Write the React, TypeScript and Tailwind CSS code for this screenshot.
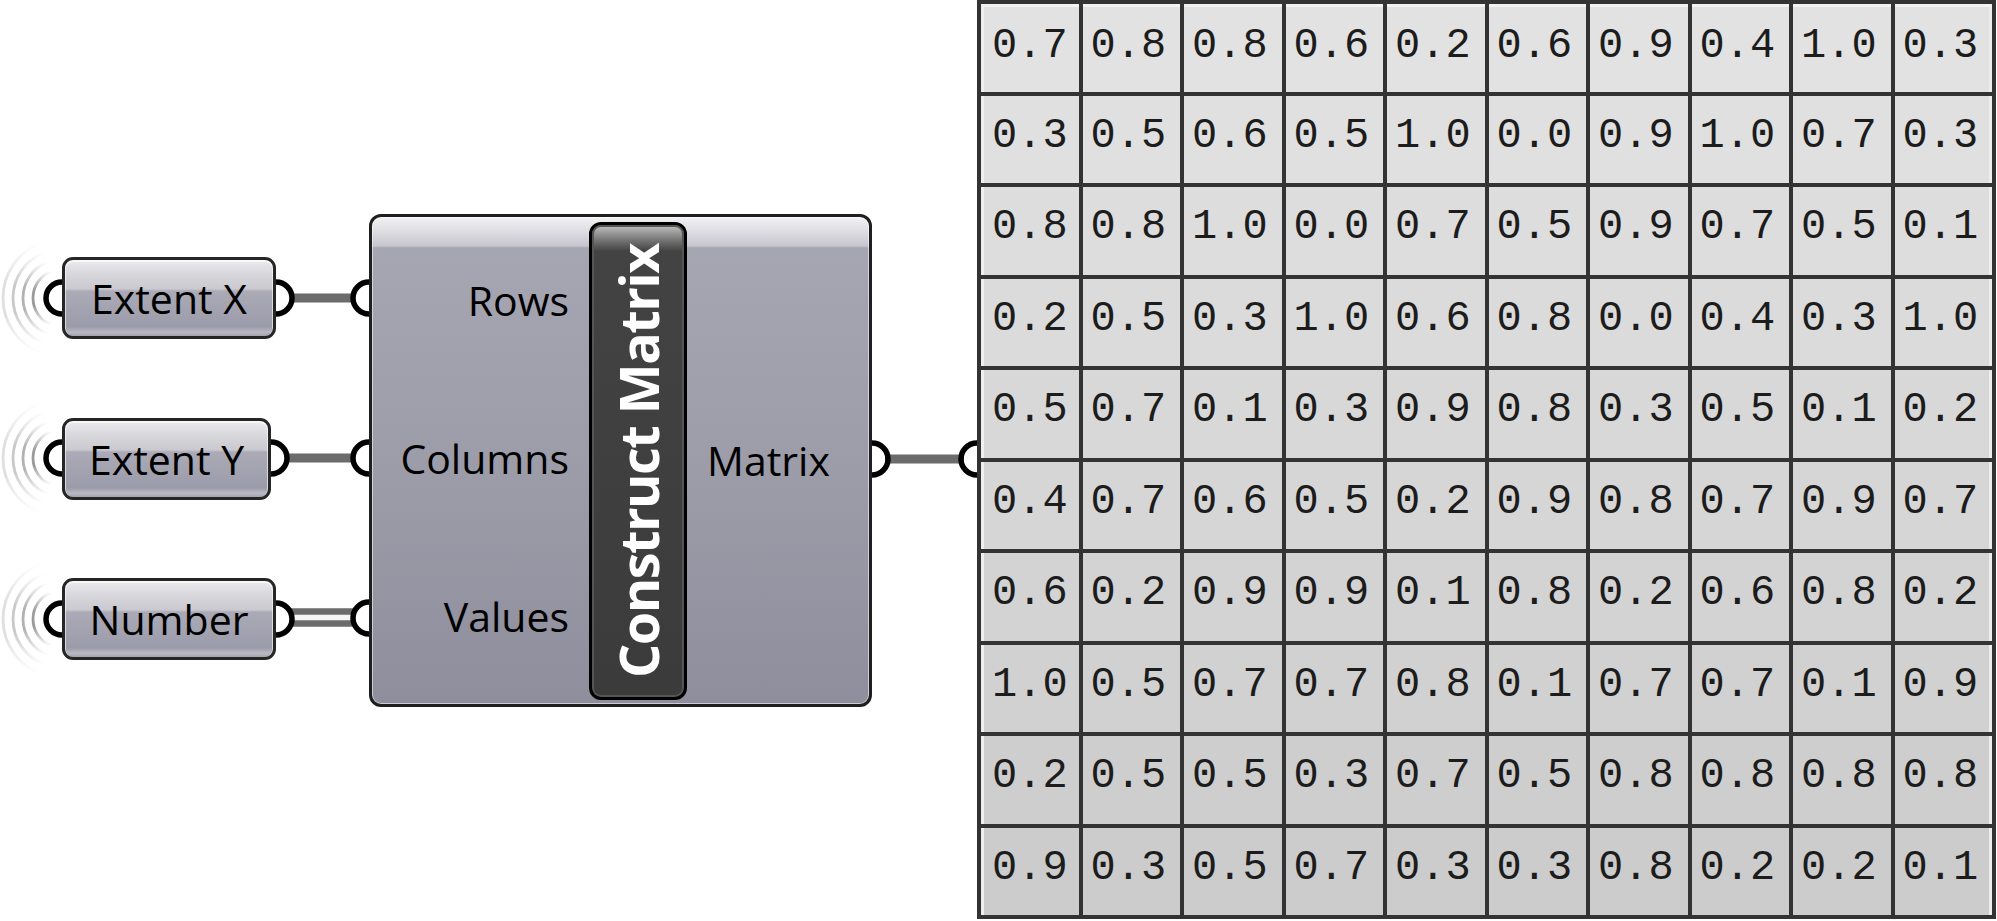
import React from 'react';

// values shown in the panel, row by row
const matrix: string[][] = [
  ['0.7', '0.8', '0.8', '0.6', '0.2', '0.6', '0.9', '0.4', '1.0', '0.3'],
  ['0.3', '0.5', '0.6', '0.5', '1.0', '0.0', '0.9', '1.0', '0.7', '0.3'],
  ['0.8', '0.8', '1.0', '0.0', '0.7', '0.5', '0.9', '0.7', '0.5', '0.1'],
  ['0.2', '0.5', '0.3', '1.0', '0.6', '0.8', '0.0', '0.4', '0.3', '1.0'],
  ['0.5', '0.7', '0.1', '0.3', '0.9', '0.8', '0.3', '0.5', '0.1', '0.2'],
  ['0.4', '0.7', '0.6', '0.5', '0.2', '0.9', '0.8', '0.7', '0.9', '0.7'],
  ['0.6', '0.2', '0.9', '0.9', '0.1', '0.8', '0.2', '0.6', '0.8', '0.2'],
  ['1.0', '0.5', '0.7', '0.7', '0.8', '0.1', '0.7', '0.7', '0.1', '0.9'],
  ['0.2', '0.5', '0.5', '0.3', '0.7', '0.5', '0.8', '0.8', '0.8', '0.8'],
  ['0.9', '0.3', '0.5', '0.7', '0.3', '0.3', '0.8', '0.2', '0.2', '0.1'],
];

const rowBg = [
  'bg-[#e2e2e2]',
  'bg-[#e0e0e0]',
  'bg-[#dddddd]',
  'bg-[#dbdbdb]',
  'bg-[#d8d8d8]',
  'bg-[#d6d6d6]',
  'bg-[#d3d3d3]',
  'bg-[#d1d1d1]',
  'bg-[#cecece]',
  'bg-[#cccccc]',
];

const params = [
  { label: 'Extent X', pos: 'top-[257px] w-[214px]', cy: 298, right: 276 },
  { label: 'Extent Y', pos: 'top-[418px] w-[209px]', cy: 458, right: 271 },
  { label: 'Number', pos: 'top-[578px] w-[214px]', cy: 619, right: 276 },
];

const ringColors = ['#9a9a9a', '#b2b2b2', '#c9c9c9', '#dfdfdf'];
const ringRadii = [29, 39, 49, 59];

const GRIP_R = 16;

const leftGrip = (cx: number, cy: number) =>
  `M ${cx} ${cy - GRIP_R} A ${GRIP_R} ${GRIP_R} 0 0 0 ${cx} ${cy + GRIP_R}`;
const rightGrip = (cx: number, cy: number) =>
  `M ${cx} ${cy - GRIP_R} A ${GRIP_R} ${GRIP_R} 0 0 1 ${cx} ${cy + GRIP_R}`;

const ringArc = (cx: number, cy: number, r: number) => {
  const a = (68 * Math.PI) / 180;
  const x = cx - r * Math.cos(a);
  const dy = r * Math.sin(a);
  return `M ${x} ${cy - dy} A ${r} ${r} 0 0 0 ${x} ${cy + dy}`;
};

const ParamBox: React.FC<{ label: string; pos: string }> = ({ label, pos }) => (
  <div
    className={`absolute left-[62px] h-[82px] ${pos} flex items-center justify-center rounded-[11px] border-[3px] border-[#262626] bg-[linear-gradient(to_bottom,#ececef_0%,#d6d6db_20%,#c9c9cf_38%,#abaab6_41%,#9c9baa_88%,#b9b8c3_95%,#a3a2ae_100%)] shadow-[inset_0_1px_0_1px_rgba(255,255,255,0.6)]`}
  >
    <span className="font-['Open_Sans',sans-serif] text-[41px] leading-none text-black">{label}</span>
  </div>
);

const Wires: React.FC = () => (
  <svg className="pointer-events-none absolute left-0 top-0" width={1997} height={921}>
    {/* single wires */}
    <line x1={290} y1={298} x2={355} y2={298} stroke="#6b6b6b" strokeWidth={9} />
    <line x1={285} y1={458} x2={355} y2={458} stroke="#6b6b6b" strokeWidth={9} />
    {/* list wire */}
    <rect x={290} y={613} width={65} height={7} fill="#f5f5f5" />
    <line x1={290} y1={611.5} x2={355} y2={611.5} stroke="#6b6b6b" strokeWidth={6.5} />
    <line x1={290} y1={623.5} x2={355} y2={623.5} stroke="#6b6b6b" strokeWidth={6.5} />
    <line x1={885} y1={459} x2={964} y2={459} stroke="#6b6b6b" strokeWidth={9} />

    {/* grips */}
    <g fill="none" stroke="#000" strokeWidth={5.5}>
      {params.map(p => (
        <g key={p.label}>
          <path d={leftGrip(62, p.cy)} />
          <path d={rightGrip(p.right, p.cy)} />
        </g>
      ))}
      <path d={leftGrip(369, 298)} />
      <path d={leftGrip(369, 458)} />
      <path d={leftGrip(369, 618)} />
      <path d={rightGrip(872, 459)} />
      <path d={leftGrip(977, 459)} />
    </g>
  </svg>
);

const Rings: React.FC = () => (
  <svg className="pointer-events-none absolute left-0 top-0" width={400} height={921}>
    <defs>
      {ringColors.map((c, i) => (
        <linearGradient key={c} id={`ring${i}`} x1="0" y1="0" x2="0" y2="1">
          <stop offset="0%" stopColor={c} stopOpacity={0} />
          <stop offset="35%" stopColor={c} stopOpacity={1} />
          <stop offset="65%" stopColor={c} stopOpacity={1} />
          <stop offset="100%" stopColor={c} stopOpacity={0} />
        </linearGradient>
      ))}
    </defs>
    {params.map(p => (
      <g key={p.label} fill="none" strokeWidth={2.8}>
        {ringRadii.map((r, i) => (
          <path key={r} d={ringArc(62, p.cy, r)} stroke={`url(#ring${i})`} />
        ))}
      </g>
    ))}
  </svg>
);

const MatrixPanel: React.FC = () => (
  <div className="absolute left-[977px] top-0 grid h-[919px] w-[1019px] grid-cols-10 grid-rows-10 gap-[4px] bg-[#333333] p-[4px]">
    {matrix.map((row, r) =>
      row.map((v, c) => (
        <div
          key={`${r}-${c}`}
          className={`flex items-center pb-[7px] pl-[8px] ${rowBg[r]} ${r === 0 ? 'border-t-[3px] border-t-[#f2f2f2]' : ''} ${c === 0 ? 'border-l-[3px] border-l-[#efefef]' : ''} ${c === 9 ? 'border-r-[3px] border-r-[#ededed]' : ''}`}
        >
          <span className="font-['Liberation_Mono',monospace] text-[42px] leading-none text-[#1c1c1c]">{v}</span>
        </div>
      ))
    )}
  </div>
);

const ConstructMatrix: React.FC = () => (
  <div className="absolute left-[369px] top-[214px] flex h-[493px] w-[503px] items-start rounded-[12px] border-[3px] border-[#1f1f1f] bg-[linear-gradient(to_bottom,#f3f3f5_0%,#d6d5dc_4%,#c6c5ce_6%,#a6a5b2_6.3%,#9d9ca9_50%,#8f8e9c_100%)] shadow-[inset_0_0_0_1px_rgba(255,255,255,0.55)]">
    <div className="flex w-[217px] flex-col items-end pr-[20px] pt-[4px] font-['Open_Sans',sans-serif] text-[41px] leading-none text-black">
      <div className="flex h-[158px] items-center">Rows</div>
      <div className="flex h-[158px] items-center">Columns</div>
      <div className="flex h-[158px] items-center">Values</div>
    </div>
    <div className="mt-[5px] flex h-[478px] w-[98px] items-center justify-center rounded-[12px] border-[3px] border-black bg-[linear-gradient(to_bottom,#c2c2c2_0%,#7a7a7a_3%,#434343_5.5%,#3b3b3b_100%)] shadow-[inset_0_0_0_2px_#555]">
      <span className="rotate-180 font-['Open_Sans',sans-serif] text-[54px] font-bold leading-none tracking-[-1.5px] text-white [writing-mode:vertical-rl]">
        Construct Matrix
      </span>
    </div>
    <div className="flex h-full items-center pl-[20px] font-['Open_Sans',sans-serif] text-[41px] leading-none text-black">
      Matrix
    </div>
  </div>
);

export default function App() {
  return (
    <div className="relative h-[921px] w-[1997px] overflow-hidden bg-white">
      <Rings />
      {params.map(p => (
        <ParamBox key={p.label} label={p.label} pos={p.pos} />
      ))}
      <ConstructMatrix />
      <MatrixPanel />
      <Wires />
    </div>
  );
}
